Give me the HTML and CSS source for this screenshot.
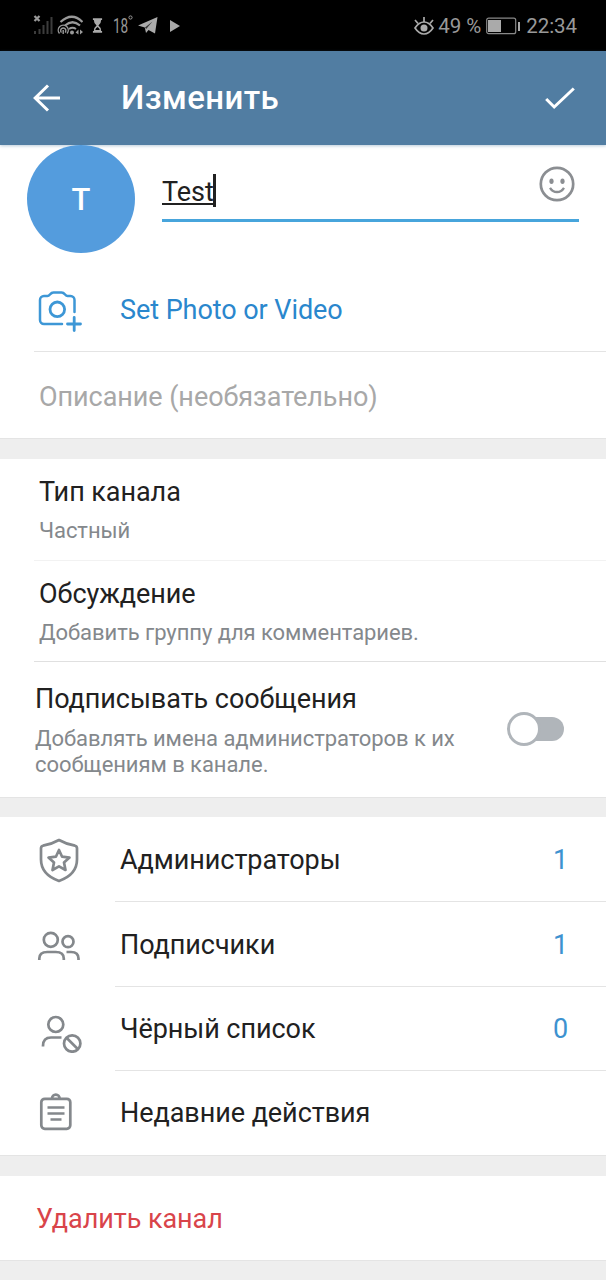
FILE: index.html
```html
<!DOCTYPE html>
<html lang="ru">
<head>
    <meta charset="UTF-8">
    <meta name="viewport" content="width=device-width, initial-scale=1.0">
    <title>Изменить</title>
    <link rel="stylesheet" href="styles.css">
</head>
<body>
    <div class="status-bar">
        <svg class="status-icons" width="50" height="24" viewBox="0 0 50 24" fill="none" stroke="#999">
            <path d="M1.500 3l5 5M6.500 3l-5 5" stroke-width="2.200"/>
            <path d="M2 21v-3M6.500 21v-5M10.500 21v-9M14.500 21v-13M18.500 21V4" stroke="#3c3c3c" stroke-width="2"/>
            <path d="M27.500 9q11.500-10.500 22 0M32 12.500q7.500-6.500 15 0" stroke-width="2.200"/>
            <path d="M36 16q3.500-2.500 7 0" stroke-width="2"/>
            <path d="M26.500 20.500a5 5 0 1 1 7.500 0M28.500 19.500a2.600 2.600 0 1 1 3.500 0M30.200 17v4" stroke-width="1.400"/>
            <circle cx="39" cy="19.500" r="2" fill="#999" stroke="none"/>
            <path d="M45.500 16.500v5l-3-2zM47 16.500v5l3-2.500z" fill="#999" stroke="none"/>
        </svg>
        <svg class="status-hourglass" width="11" height="15" viewBox="0 0 12 16">
            <path d="M1 0h10v2H1zM1 14h10v2H1zM2 2h8q0 4-3 6 3 2 3 6H2q0-4 3-6-3-2-3-6z" fill="#aaa"/>
            <path d="M6 9.500q2 1 2.500 3.500h-5q.5-2.500 2.500-3.500z" fill="#000"/>
        </svg>
        <span class="status-temp">18</span>
        <svg class="status-degree" width="5" height="20" viewBox="0 0 5 20"><circle cx="2.500" cy="2.500" r="1.600" fill="none" stroke="#999"/></svg>
        <svg class="status-plane" width="20" height="17" viewBox="0 0 20 17">
            <path d="M0 8.500L19.500 0 17 16.500 10.500 13 8 16 6.800 10.500z" fill="#aaa"/>
            <path d="M7 10.500L14.500 4.500 8.200 12z" fill="#333"/>
        </svg>
        <svg class="status-play" width="10" height="12" viewBox="0 0 10 12"><path d="M0 0l10 6-10 6z" fill="#aaa"/></svg>
        <div class="status-right">
            <svg class="status-eye" width="20" height="18" viewBox="0 0 20 18" fill="none" stroke="#aaa">
                <path d="M1 11q4-6 9-6t9 6q-4 6-9 6t-9-6z" stroke-width="1.700"/>
                <circle cx="10" cy="11" r="3.500" fill="#aaa" stroke="none"/>
                <path d="M10 5V0M4 6.500L1 3M16 6.500L19 3" stroke-width="1.700"/>
            </svg>
            <span class="status-percent">49 %</span>
            <svg class="status-battery" width="34" height="18" viewBox="0 0 34 18">
                <rect x=".7" y="1.200" width="29" height="15.500" rx="2" fill="none" stroke="#888" stroke-width="1.200"/>
                <path d="M2 3h13v12H2zM32 5h2v9h-2z" fill="#aaa"/>
            </svg>
            <span class="status-time">22:34</span>
        </div>
    </div>

    <div class="header">
        <svg class="back" width="28" height="28" viewBox="0 0 28 28" fill="none" stroke="#fff" stroke-width="3">
            <path d="M27 14H2M15 1.500L2.200 14 15 26.500"/>
        </svg>
        <h1 class="title">Изменить</h1>
        <svg class="done" width="30" height="23" viewBox="0 0 30 23" fill="none" stroke="#fff" stroke-width="3">
            <path d="M1.200 12l8 8L28.800 1.500"/>
        </svg>
    </div>

    <div class="section">
        <div class="name-row">
            <div class="avatar">T</div>
            <div class="name-field">
                <span class="name-text">Test</span><span class="caret"></span>
                <svg class="smile" width="36" height="36" viewBox="0 0 36 36" fill="none" stroke="#8b8e92">
                    <circle cx="18" cy="18" r="16.200" stroke-width="2.700"/>
                    <path d="M11 21.800q2.500 4.200 7 4.200t7-4.200" stroke-width="2.300"/>
                    <ellipse cx="12.500" cy="15.300" rx="2.100" ry="2.700" fill="#8b8e92" stroke="none"/>
                    <ellipse cx="23.500" cy="15.300" rx="2.100" ry="2.700" fill="#8b8e92" stroke="none"/>
                </svg>
            </div>
        </div>
        <div class="photo-row">
            <svg class="row-icon" width="48" height="48" viewBox="0 0 48 48" fill="none" stroke="#3d97d6" stroke-width="2.500" stroke-linecap="round" stroke-linejoin="round">
                <path d="M27 39H9a4 4 0 0 1-4-4V15a4 4 0 0 1 4-4h3.500c2.500 0 2.500-3.500 6-3.500h8c3.500 0 3.500 3.500 6 3.500H35.500a4 4 0 0 1 4 4v12"/>
                <circle cx="22.300" cy="24.300" r="7.300" stroke-width="2.800"/>
                <path d="M32.500 39H45.500M39.200 32.500V45.500" stroke-width="2.800"/>
            </svg>
            <span class="photo-label">Set Photo or Video</span>
        </div>
        <div class="description">Описание (необязательно)</div>
    </div>

    <div class="section settings">
        <div class="info-row">
            <div class="info-title">Тип канала</div>
            <div class="info-text">Частный</div>
        </div>
        <div class="info-row">
            <div class="info-title">Обсуждение</div>
            <div class="info-text">Добавить группу для комментариев.</div>
        </div>
        <div class="sign-row">
            <div class="sign-texts">
                <div class="info-title">Подписывать сообщения</div>
                <div class="sign-text">Добавлять имена администраторов к их<br>сообщениям в канале.</div>
            </div>
            <div class="switch"><div class="switch-thumb"></div></div>
        </div>
    </div>

    <div class="section">
        <div class="menu-row">
            <svg class="row-icon" width="48" height="48" viewBox="0 0 48 48" fill="none" stroke="#84888c" stroke-width="2.700" stroke-linejoin="round">
                <path d="M24 4Q32 8.500 40 9.700q2 .4 2 2.500V23.500q0 15-18 21.500Q6 38.500 6 23.500V12.200q0-2.100 2-2.500Q16 8.500 24 4z"/>
                <path d="M24 14l3.100 6.700 7.400.9-5.500 5 1.500 7.400-6.500-3.700-6.500 3.700 1.500-7.400-5.500-5 7.400-.9z"/>
            </svg>
            <span class="menu-label">Администраторы</span>
            <span class="menu-count">1</span>
        </div>
        <div class="menu-row">
            <svg class="row-icon" width="48" height="48" viewBox="0 0 48 48" fill="none" stroke="#84888c" stroke-width="2.700">
                <circle cx="15.800" cy="18.800" r="7"/>
                <circle cx="33" cy="20.700" r="5.500"/>
                <path d="M4.300 39V37.500q0-6.500 8-6.500h8.500q8 0 8 6.500v1.500M31.500 31h4.500q7.500 0 7.500 6.500v1.500"/>
            </svg>
            <span class="menu-label">Подписчики</span>
            <span class="menu-count">1</span>
        </div>
        <div class="menu-row">
            <svg class="row-icon" width="48" height="48" viewBox="0 0 48 48" fill="none" stroke="#84888c" stroke-width="2.700">
                <circle cx="20.800" cy="19.500" r="7.500"/>
                <path d="M8 41.500V41q0-8.500 8-8.500h10.500"/>
                <circle cx="37.200" cy="38.500" r="8.200"/>
                <path d="M31.500 32.800l11.500 11.500"/>
            </svg>
            <span class="menu-label">Чёрный список</span>
            <span class="menu-count">0</span>
        </div>
        <div class="menu-row">
            <svg class="row-icon" width="48" height="48" viewBox="0 0 48 48" fill="none" stroke="#84888c" stroke-width="2.700">
                <rect x="6.300" y="9.800" width="29" height="30" rx="3.500"/>
                <path d="M17 9.500a3.800 3.800 0 1 1 7.600 0M12.500 18.500h17M12.500 24.500h17M15.500 30.500h11"/>
            </svg>
            <span class="menu-label">Недавние действия</span>
        </div>
    </div>

    <div class="section">
        <div class="delete">Удалить канал</div>
    </div>
</body>
</html>
```
FILE: styles.css
```css
body {
    background-color: #eeeeee;
    color: #212121;
    font-family: Roboto, "Noto Sans", sans-serif;
    font-size: 27px;
    letter-spacing: -0.06px;
    margin: 0;
    height: 1280px;
    overflow: hidden;
}
.status-bar {
    height: 51px;
    background-color: #000000;
    color: #999999;
    display: flex;
    align-items: center;
    padding: 0 29px 0 33px;
    box-sizing: border-box;
    font-size: 20.5px;
}
.status-icons {
    margin-top: -2px;
}
.status-hourglass {
    margin-left: 9px;
}
.status-temp {
    margin-left: 10px;
    width: 15px;
    font-size: 20px;
    transform: scaleX(0.68);
    transform-origin: left;
}
.status-degree {
    margin-top: -2px;
}
.status-plane {
    margin-left: 5px;
}
.status-play {
    margin-left: 12px;
}
.status-right {
    margin-left: auto;
    display: flex;
    align-items: center;
}
.status-battery {
    margin: 0 6px 0 5px;
}
.status-percent {
    margin-left: 4px;
}
.header {
    height: 94px;
    background-color: #517da2;
    color: #ffffff;
    display: flex;
    align-items: center;
    padding: 0 31px 0 33px;
    box-sizing: border-box;
    position: relative;
    box-shadow: 0 1px 3px rgba(81, 125, 162, 0.4);
}
.title {
    margin: -2px auto 0 60px;
    font-size: 33px;
    font-weight: 500;
    letter-spacing: 0.4px;
}
.section {
    background-color: #ffffff;
    margin-bottom: 20px;
    border-bottom: 1px solid #e4e4e4;
}
.settings {
    margin-bottom: 19px;
}
.name-row {
    height: 122px;
    display: flex;
    padding: 0 27px;
}
.avatar {
    width: 108px;
    height: 108px;
    border-radius: 50%;
    background-color: #549cdd;
    color: #ffffff;
    display: flex;
    align-items: center;
    justify-content: center;
    font-size: 31px;
    font-weight: 500;
    position: relative;
}
.name-field {
    flex-grow: 1;
    height: 74px;
    margin-left: 27px;
    border-bottom: 3px solid #47a5dc;
    display: flex;
    align-items: center;
}
.name-text {
    margin-top: 20px;
    text-decoration: underline;
    text-decoration-thickness: 1.5px;
    text-underline-offset: 2px;
}
.caret {
    width: 3px;
    height: 33px;
    margin: 17px 0 0 -1px;
    background-color: #212121;
}
.smile {
    margin: 3px 4px 0 auto;
}
.photo-row {
    height: 84px;
    display: flex;
    align-items: center;
    padding-left: 35px;
    color: #2a87cd;
}
.row-icon {
    width: 48px;
    height: 48px;
    flex-shrink: 0;
}
.photo-label {
    margin: 2px 0 0 37px;
}
.description {
    height: 86px;
    line-height: 90px;
    margin-left: 34px;
    padding-left: 5px;
    border-top: 1px solid #e4e4e4;
    color: #a8a8a8;
}
.info-row {
    height: 101px;
    box-sizing: border-box;
    margin-left: 34px;
    padding: 17px 0 0 5px;
    border-bottom: 1px solid #e0e0e0;
}
.info-row:first-child {
    height: 102px;
    border-bottom-color: #f2f2f2;
}
.info-title {
    line-height: 32px;
}
.info-text {
    margin-top: 10px;
    font-size: 22px;
    line-height: 26px;
    color: #84888c;
}
.sign-row {
    height: 135px;
    display: flex;
    padding: 21px 42px 0 35px;
    box-sizing: border-box;
}
.sign-texts {
    flex-grow: 1;
}
.sign-text {
    margin-top: 11px;
    font-size: 22px;
    line-height: 26px;
    color: #84888c;
}
.switch {
    width: 50px;
    height: 24px;
    margin-top: 34px;
    border-radius: 12px;
    background-color: #b0b5ba;
    display: flex;
    align-items: center;
}
.switch-thumb {
    width: 28px;
    height: 28px;
    flex-shrink: 0;
    margin-left: -7px;
    border: 3px solid #b0b5ba;
    border-radius: 50%;
    background-color: #ffffff;
}
.menu-row {
    height: 85px;
    display: flex;
    align-items: center;
    padding: 0 38px 0 35px;
    box-sizing: border-box;
    background: linear-gradient(#e4e4e4, #e4e4e4) 115px 100% / 100% 1px no-repeat;
}
.menu-row:nth-child(n+3) {
    height: 84px;
}
.menu-row:last-child {
    background: none;
}
.menu-label {
    margin-left: 37px;
}
.menu-count {
    margin-left: auto;
    color: #3d92d0;
}
.delete {
    height: 84px;
    line-height: 86px;
    padding-left: 36px;
    color: #d9444a;
}
```
